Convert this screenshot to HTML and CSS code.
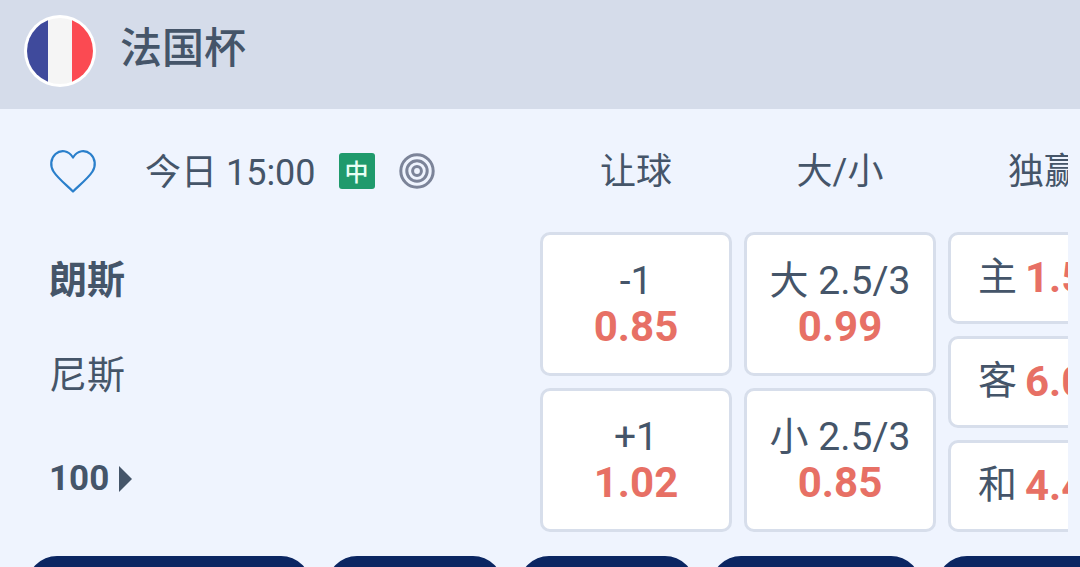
FILE: index.html
```html
<!DOCTYPE html>
<html>
<head>
	<title>法国杯</title>
	<link rel="stylesheet" href="styles.css">
</head>
<body>
	<!-- League header -->
	<div class="league">
		<svg class="flag" width="72" height="72" viewBox="0 0 72 72">
			<defs><clipPath id="round"><circle cx="36" cy="36" r="33"/></clipPath></defs>
			<circle cx="36" cy="36" r="36" fill="#fff"/>
			<g clip-path="url(#round)">
				<rect x="0" y="0" width="24" height="72" fill="#3f4a9c"/>
				<rect x="24" y="0" width="24" height="72" fill="#f5f5f5"/>
				<rect x="48" y="0" width="24" height="72" fill="#fb4a52"/>
			</g>
		</svg>
		<span class="league-name">法国杯</span>
	</div>

	<div class="match">
		<!-- Info row with column titles -->
		<div class="info-row">
			<div class="info-left">
				<svg class="heart" width="48" height="46" viewBox="0 0 48 46">
					<path d="M24 43.5 C18 37.5 9 30.5 4.5 23.5 C1 18 1.5 10.5 6.5 6 C11.5 1.5 19.5 2 24 9.5 C28.5 2 36.5 1.5 41.5 6 C46.5 10.5 47 18 43.5 23.5 C39 30.5 30 37.5 24 43.5 Z" fill="none" stroke="#2a7fcb" stroke-width="2.2" stroke-linejoin="round"/>
				</svg>
				<span class="kickoff">今日 15:00</span>
				<span class="badge">中</span>
				<svg class="target" width="36" height="36" viewBox="0 0 36 36">
					<circle cx="18" cy="18" r="16.2" fill="none" stroke="#7c8499" stroke-width="3"/>
					<circle cx="18" cy="18" r="10.2" fill="none" stroke="#7c8499" stroke-width="3"/>
					<circle cx="18" cy="18" r="4.4" fill="none" stroke="#7c8499" stroke-width="3"/>
				</svg>
			</div>
			<div class="col-titles">
				<span class="col-title">让球</span>
				<span class="col-title">大/小</span>
				<span class="col-title">独赢</span>
			</div>
		</div>

		<!-- Teams and odds -->
		<div class="market-row">
			<div class="teams">
				<div class="team team-home">朗斯</div>
				<div class="team">尼斯</div>
				<div class="more">100<span class="more-arrow"></span></div>
			</div>
			<div class="odds">
				<div class="odds-col">
					<div class="cell"><span class="label">-1</span><span class="price">0.85</span></div>
					<div class="cell"><span class="label">+1</span><span class="price">1.02</span></div>
				</div>
				<div class="odds-col">
					<div class="cell"><span class="label">大 2.5/3</span><span class="price">0.99</span></div>
					<div class="cell"><span class="label">小 2.5/3</span><span class="price">0.85</span></div>
				</div>
				<div class="odds-col">
					<div class="cell cell-line"><span class="label">主</span><span class="price">1.50</span></div>
					<div class="cell cell-line"><span class="label">客</span><span class="price">6.00</span></div>
					<div class="cell cell-line"><span class="label">和</span><span class="price">4.40</span></div>
				</div>
			</div>
		</div>

		<!-- Bottom tabs, cut off by the window -->
		<div class="tabs">
			<div class="tab tab-1"></div>
			<div class="tab tab-2"></div>
			<div class="tab tab-3"></div>
			<div class="tab tab-4"></div>
			<div class="tab tab-5"></div>
		</div>
	</div>
</body>
</html>
```
FILE: styles.css
```css
/* General reset */
* {
	margin: 0;
	padding: 0;
	box-sizing: border-box;
}

body {
	width: 1080px;
	height: 567px;
	overflow: hidden;
	background-color: #eff4fe;
	color: #455569;
	font-family: Roboto, "Noto Sans CJK SC", sans-serif;
}

/* League header */
.league {
	height: 109px;
	padding: 15px 0 0 24px;
	display: flex;
	align-items: flex-start;
	background-color: #d5dcea;
}

.flag {
	display: block;
}

.league-name {
	margin-left: 24px;
	font-size: 42px;
	line-height: 68px;
	font-weight: 500;
}

/* Info row */
.info-row {
	height: 123px;
	display: flex;
	justify-content: space-between;
}

.info-left {
	display: flex;
	align-items: center;
	height: 123px;
	padding-left: 49px;
}

.kickoff {
	margin: 0 0 4px 48px;
	font-size: 36px;
	white-space: nowrap;
}

.badge {
	width: 36px;
	height: 36px;
	margin-left: 23px;
	display: flex;
	align-items: center;
	justify-content: center;
	border-radius: 3px;
	background-color: #1f9a6c;
	color: #e8fff4;
	font-size: 24px;
	font-weight: 500;
}

.target {
	margin-left: 24px;
}

.col-titles {
	width: 528px;
	height: 123px;
	margin-right: 12px;
	overflow: hidden;
	display: flex;
	gap: 12px;
	white-space: nowrap;
}

.col-title {
	width: 192px;
	flex-shrink: 0;
	text-align: center;
	font-size: 36px;
	line-height: 127px;
}

/* Teams column */
.market-row {
	display: flex;
	justify-content: space-between;
}

.teams {
	padding: 1px 0 0 49px;
}

.team {
	height: 94px;
	font-size: 38px;
	line-height: 94px;
}

.team-home {
	height: 95px;
	line-height: 94px;
	font-weight: 700;
}

.more {
	margin-top: 27px;
	display: flex;
	align-items: center;
	font-size: 35px;
	font-weight: 700;
	line-height: 60px;
}

.more-arrow {
	width: 0;
	height: 0;
	margin-left: 10px;
	border-top: 13px solid transparent;
	border-bottom: 13px solid transparent;
	border-left: 13px solid #455569;
}

/* Odds grid, the last column runs under the right edge */
.odds {
	width: 528px;
	margin-right: 12px;
	overflow: hidden;
	display: flex;
	gap: 12px;
}

.odds-col {
	width: 192px;
	flex-shrink: 0;
	display: flex;
	flex-direction: column;
	gap: 12px;
}

.cell {
	height: 144px;
	display: flex;
	flex-direction: column;
	align-items: center;
	justify-content: center;
	border: 3px solid #d7deeb;
	border-radius: 10px;
	background-color: #fff;
}

.cell-line {
	height: 92px;
	flex-direction: row;
	justify-content: flex-start;
	padding-left: 27px;
	white-space: nowrap;
}

.label {
	font-size: 39px;
	line-height: 46px;
}

.price {
	font-size: 42px;
	line-height: 46px;
	font-weight: 700;
	color: #e77065;
}

.cell-line .label {
	margin-bottom: 3px;
}

.cell-line .price {
	margin-left: 8px;
}

/* Bottom tabs */
.tabs {
	margin-top: 24px;
	padding-left: 27px;
	display: flex;
	gap: 16px;
}

.tab {
	height: 60px;
	flex-shrink: 0;
	border-radius: 30px;
	background-color: #0b2662;
}

.tab-1 { width: 284px; }
.tab-2 { width: 176px; }
.tab-3 { width: 176px; }
.tab-4 { width: 210px; }
.tab-5 { width: 200px; }
```
